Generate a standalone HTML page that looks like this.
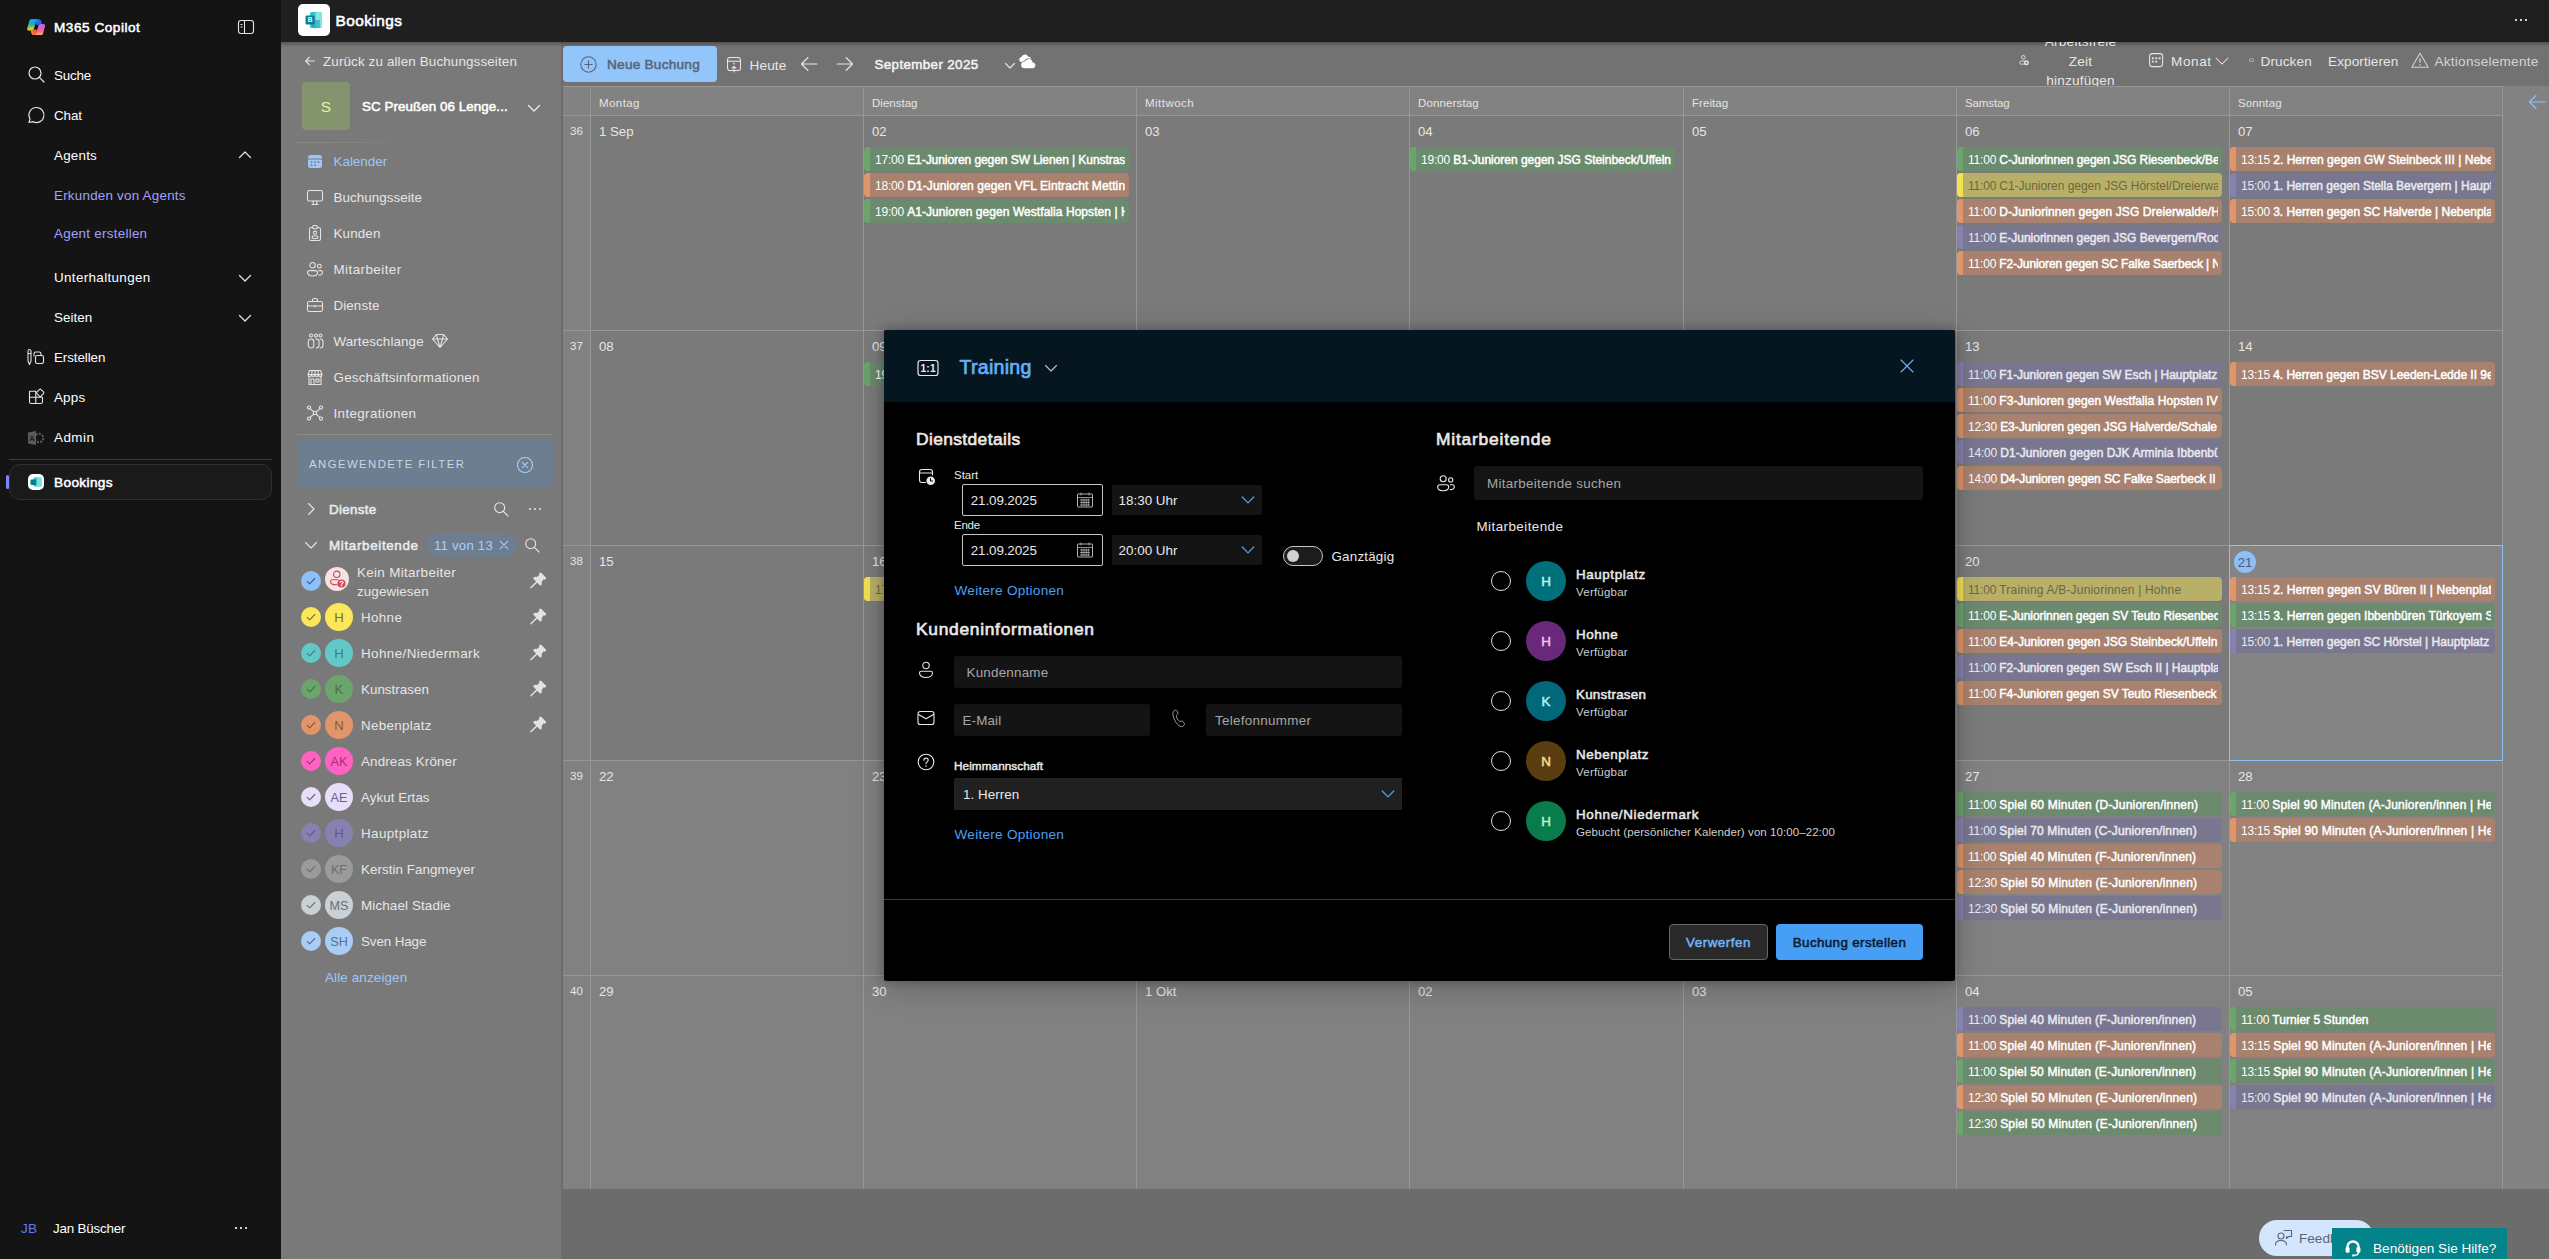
<!DOCTYPE html>
<html lang="de"><head><meta charset="utf-8"><title>Bookings</title><style>
html,body{margin:0;padding:0;background:#141414;}
body{width:2549px;height:1259px;overflow:hidden;position:relative;font-family:"Liberation Sans",sans-serif;}
div,svg{position:absolute;box-sizing:border-box;}
.t{white-space:nowrap;}
.ev{height:24px;border-radius:4px;overflow:hidden;font-size:12px;line-height:24px;color:#fff;white-space:nowrap;letter-spacing:-.2px;}
.ev i{position:absolute;left:0;top:0;width:6px;height:24px;display:block;}
.ev span{position:absolute;left:11px;top:1px;right:4px;height:23px;overflow:hidden;}
.ev b{font-weight:400;-webkit-text-stroke:.48px;}
.ev u{text-decoration:none;}
</style></head><body>
<div style="left:0px;top:0px;width:281px;height:1259px;background:#141414;"></div>
<svg style="left:26.8px;top:18.8px;" width="18.4" height="16.6" viewBox="0 0 18.4 16.6" fill="none"><defs>
<linearGradient id="cg1" x1="0" y1="0" x2="0" y2="1"><stop offset="0" stop-color="#29b4ff"/><stop offset=".22" stop-color="#1a9cf0"/><stop offset=".5" stop-color="#2fb198"/><stop offset=".74" stop-color="#a6cb42"/><stop offset=".93" stop-color="#f3d500"/></linearGradient>
<linearGradient id="cg2" x1="0" y1="0" x2="0" y2="1"><stop offset="0" stop-color="#b267ff"/><stop offset=".4" stop-color="#e660b4"/><stop offset=".66" stop-color="#ff6a84"/><stop offset="1" stop-color="#ffb45e"/></linearGradient>
<linearGradient id="cg3" x1="0" y1="0" x2="1" y2="1"><stop offset="0" stop-color="#1a86f2"/><stop offset="1" stop-color="#1458de"/></linearGradient>
<linearGradient id="cg4" x1="0" y1="0" x2="1" y2="0"><stop offset="0" stop-color="#ff8a48"/><stop offset="1" stop-color="#f2552c"/></linearGradient></defs>
<path d="M8.500 0.200H11.800C13.100 0.200 13.900 0.900 14.300 2.200L15 5H12.700C11.700 5 11 5.600 10.700 6.400L9 5.600z" fill="url(#cg3)"/>
<path d="M9.700 16.300H6.900C5.600 16.300 4.700 15.600 4.400 14.300L3.800 11.400H6.200C7.200 11.400 7.800 10.900 8.100 10L9.800 10.900z" fill="url(#cg4)"/>
<path d="M4.300 0.200H9.600L6.800 10.200C6.500 11.100 5.900 11.500 5 11.500H1.900C0.600 11.500-.1 10.500.3 9.200L2.300 1.800C2.600 .8 3.300 .2 4.300 .2z" fill="url(#cg1)"/>
<path d="M14.100 16.300H8.600L11.500 6.300C11.800 5.400 12.400 4.900 13.300 4.900H16.400C17.700 4.900 18.400 5.900 18 7.200L16 14.700C15.700 15.700 15 16.300 14.100 16.300z" fill="url(#cg2)"/></svg>
<div class="t" style="left:54px;top:18px;font-size:13.6px;line-height:20px;color:#fff;-webkit-text-stroke:0.52px;letter-spacing:0.524px;">M365 Copilot</div>
<svg style="left:236px;top:17px;" width="20" height="20" viewBox="0 0 20 20" fill="none"><rect x="2.500" y="3.500" width="15" height="13" rx="2.500" stroke="#e6e6e6" stroke-width="1.100"/><path d="M8.500 3.500v13M4.500 7.500h2M4.500 10h2" stroke="#e6e6e6" stroke-width="1.100"/></svg>
<svg style="left:25.5px;top:64.3px;" width="20" height="20" viewBox="0 0 20 20" fill="none"><circle cx="9" cy="9" r="6" stroke="#e6e6e6" stroke-width="1.200"/><path d="M13.400 13.400L18 18" stroke="#e6e6e6" stroke-width="1.200" stroke-linecap="round"/></svg>
<div class="t" style="left:54px;top:66px;font-size:13.4px;line-height:20px;color:#fff;letter-spacing:-0.214px;">Suche</div>
<svg style="left:25.7px;top:105px;" width="20" height="20" viewBox="0 0 20 20" fill="none"><path d="M10.500 2.500a7.500 7.500 0 1 1-3.600 14.100L3 17.500l1-3.700A7.500 7.500 0 0 1 10.500 2.500z" stroke="#e6e6e6" stroke-width="1.200" stroke-linejoin="round"/></svg>
<div class="t" style="left:54px;top:106px;font-size:13.4px;line-height:20px;color:#fff;letter-spacing:-0.074px;">Chat</div>
<div class="t" style="left:54px;top:146px;font-size:13.4px;line-height:20px;color:#fff;letter-spacing:0.216px;">Agents</div>
<svg style="left:236px;top:146px;" width="18" height="18" viewBox="0 0 18 18" fill="none"><path d="M3.500 11.500L9 6l5.500 5.500" stroke="#e6e6e6" stroke-width="1.200" stroke-linecap="round" stroke-linejoin="round"/></svg>
<div class="t" style="left:54px;top:186px;font-size:13.4px;line-height:20px;color:#9ea2ff;letter-spacing:0.231px;">Erkunden von Agents</div>
<div class="t" style="left:54px;top:224px;font-size:13.4px;line-height:20px;color:#9ea2ff;letter-spacing:0.265px;">Agent erstellen</div>
<div class="t" style="left:54px;top:268px;font-size:13.4px;line-height:20px;color:#fff;letter-spacing:0.359px;">Unterhaltungen</div>
<svg style="left:236px;top:269px;" width="18" height="18" viewBox="0 0 18 18" fill="none"><path d="M3.500 6.500L9 12l5.500-5.500" stroke="#e6e6e6" stroke-width="1.200" stroke-linecap="round" stroke-linejoin="round"/></svg>
<div class="t" style="left:54px;top:308px;font-size:13.4px;line-height:20px;color:#fff;letter-spacing:0.039px;">Seiten</div>
<svg style="left:236px;top:309px;" width="18" height="18" viewBox="0 0 18 18" fill="none"><path d="M3.500 6.500L9 12l5.500-5.500" stroke="#e6e6e6" stroke-width="1.200" stroke-linecap="round" stroke-linejoin="round"/></svg>
<svg style="left:26px;top:347px;" width="20" height="20" viewBox="0 0 20 20" fill="none"><path d="M3 2.500c1.100 0 2 .9 2 2v9.500L3.500 17.500 2 14V4.500c0-1.100.4-2 1-2zM2 6.500h3" stroke="#e6e6e6" stroke-width="1.100" stroke-linejoin="round"/><path d="M8 9.500V6.700C8 5.800 8.800 5 9.700 5h3.600c.9 0 1.700.8 1.700 1.700V8" stroke="#e6e6e6" stroke-width="1.100"/><rect x="9.500" y="8.500" width="8" height="8" rx="1.700" stroke="#e6e6e6" stroke-width="1.100"/></svg>
<div class="t" style="left:54px;top:348px;font-size:13.4px;line-height:20px;color:#fff;letter-spacing:-0.09px;">Erstellen</div>
<svg style="left:26px;top:386px;" width="20" height="20" viewBox="0 0 20 20" fill="none"><path d="M3.500 5.200h6.300v12.300H5.300c-1 0-1.800-.8-1.800-1.800zM3.500 11.300h13v4.400c0 1-.8 1.800-1.800 1.800H9.800" stroke="#e6e6e6" stroke-width="1.100" stroke-linejoin="round"/><rect x="11.300" y="3.900" width="5.800" height="5.800" rx="1.200" transform="rotate(45 14.200 6.800)" stroke="#e6e6e6" stroke-width="1.100"/></svg>
<div class="t" style="left:54px;top:388px;font-size:13.4px;line-height:20px;color:#fff;letter-spacing:0.192px;">Apps</div>
<svg style="left:26px;top:428px;" width="20" height="20" viewBox="0 0 20 20" fill="none"><path d="M2 4.500L10 3v14l-8-1.500z" fill="#5a5a5a"/><circle cx="13" cy="10" r="4.200" stroke="#5a5a5a" stroke-width="2" stroke-dasharray="2 1.200"/><circle cx="13" cy="10" r="1.600" fill="#141414"/><text x="6" y="13" font-size="7.500" font-weight="700" text-anchor="middle" fill="#1c1c1c" font-family="Liberation Sans,sans-serif">A</text></svg>
<div class="t" style="left:54px;top:428px;font-size:13.4px;line-height:20px;color:#fff;letter-spacing:0.486px;">Admin</div>
<div style="left:9px;top:459px;width:263px;height:1px;background:#3d3d3d;"></div>
<div style="left:9px;top:464px;width:263px;height:36px;background:#1a1a1a;border:1px solid #303030;border-radius:11px;"></div>
<div style="left:6px;top:475px;width:3px;height:14px;background:#7f85f5;border-radius:2px;"></div>
<div style="left:28px;top:474px;width:16px;height:16px;background:#fff;border-radius:5px;"></div>
<svg style="left:30px;top:476px;" width="12" height="12" viewBox="0 0 12 12" fill="none"><rect x="3.500" y="1.500" width="8" height="9" rx="1" fill="#35c5d0"/><rect x="7" y="1.500" width="4.500" height="9" rx="1" fill="#7be3e6"/><rect x="0.500" y="3.500" width="5.500" height="5.500" rx="1" fill="#0b7a8c"/></svg>
<div class="t" style="left:54px;top:473px;font-size:13.6px;line-height:20px;color:#fff;-webkit-text-stroke:0.52px;letter-spacing:0.385px;">Bookings</div>
<div class="t" style="left:21px;top:1219px;font-size:13.6px;line-height:20px;color:#6476f7;letter-spacing:0.312px;">JB</div>
<div class="t" style="left:53px;top:1219px;font-size:13.4px;line-height:20px;color:#fff;letter-spacing:-0.203px;">Jan Büscher</div>
<svg style="left:232px;top:1219px;" width="18" height="18" viewBox="0 0 18 18" fill="none"><circle cx="4" cy="9" r="1.100" fill="#fff"/><circle cx="9" cy="9" r="1.100" fill="#fff"/><circle cx="14" cy="9" r="1.100" fill="#fff"/></svg>
<div style="left:281px;top:0px;width:2268px;height:42px;background:#1f1f1f;"></div>
<div style="left:298px;top:4px;width:32px;height:32px;background:#fff;border-radius:5px;"></div>
<svg style="left:303px;top:9px;" width="22" height="22" viewBox="0 0 22 22" fill="none"><rect x="7" y="3" width="12" height="16" rx="1.500" fill="#2fc3d0"/><rect x="12.500" y="3" width="6.500" height="16" rx="1.500" fill="#7fe5e8"/><rect x="9" y="11" width="8" height="8" fill="#1aa3b5" opacity=".6"/><rect x="2.500" y="6.500" width="9" height="9" rx="1.200" fill="#0b7f93"/><text x="7" y="13.300" font-size="6.500" font-weight="700" text-anchor="middle" fill="#fff" font-family="Liberation Sans,sans-serif">B</text></svg>
<div class="t" style="left:335.5px;top:11px;font-size:15.4px;line-height:20px;color:#fff;-webkit-text-stroke:0.59px;letter-spacing:0.446px;">Bookings</div>
<svg style="left:2512px;top:11px;" width="18" height="18" viewBox="0 0 18 18" fill="none"><circle cx="4" cy="9" r="1.100" fill="#fff"/><circle cx="9" cy="9" r="1.100" fill="#fff"/><circle cx="14" cy="9" r="1.100" fill="#fff"/></svg>
<div style="left:281px;top:42px;width:280px;height:1217px;background:#797979;"></div>
<div style="left:561px;top:42px;width:2px;height:1217px;background:#6c6c6c;"></div>
<svg style="left:304px;top:54px;" width="12" height="14" viewBox="0 0 12 14" fill="none"><path d="M10.500 7H2M5.500 3.200L1.700 7l3.800 3.800" stroke="#e6e6e6" stroke-width="1.100" stroke-linecap="round" stroke-linejoin="round"/></svg>
<div class="t" style="left:323px;top:52px;font-size:13.4px;line-height:20px;color:#e6e6e6;letter-spacing:0.14px;">Zurück zu allen Buchungsseiten</div>
<div style="left:302px;top:82px;width:48px;height:48px;background:#84956d;border-radius:4px;"></div>
<div class="t" style="left:302px;top:97px;font-size:15.4px;line-height:20px;color:#e6efa8;width:48px;text-align:center;">S</div>
<div class="t" style="left:362px;top:97px;font-size:13.4px;line-height:20px;color:#fff;-webkit-text-stroke:0.51px;letter-spacing:0.058px;">SC Preußen 06 Lenge...</div>
<svg style="left:526px;top:100px;" width="16" height="16" viewBox="0 0 16 16" fill="none"><path d="M2.500 5.500L8 11l5.500-5.500" stroke="#f0f0f0" stroke-width="1.200" stroke-linecap="round" stroke-linejoin="round"/></svg>
<div style="left:297px;top:142px;width:98px;height:1px;background:linear-gradient(90deg,#8c8c8c,#7c7c7c);"></div>
<div class="t" style="left:333.5px;top:152px;font-size:13.4px;line-height:20px;color:#9cc7f7;letter-spacing:-0.001px;">Kalender</div>
<div class="t" style="left:333.5px;top:188px;font-size:13.4px;line-height:20px;color:#e6e6e6;letter-spacing:0.05px;">Buchungsseite</div>
<div class="t" style="left:333.5px;top:224px;font-size:13.4px;line-height:20px;color:#e6e6e6;letter-spacing:0.138px;">Kunden</div>
<div class="t" style="left:333.5px;top:260px;font-size:13.4px;line-height:20px;color:#e6e6e6;letter-spacing:0.439px;">Mitarbeiter</div>
<div class="t" style="left:333.5px;top:296px;font-size:13.4px;line-height:20px;color:#e6e6e6;letter-spacing:0.085px;">Dienste</div>
<div class="t" style="left:333.5px;top:332px;font-size:13.4px;line-height:20px;color:#e6e6e6;letter-spacing:0.106px;">Warteschlange</div>
<div class="t" style="left:333.5px;top:368px;font-size:13.4px;line-height:20px;color:#e6e6e6;letter-spacing:0.217px;">Geschäftsinformationen</div>
<div class="t" style="left:333.5px;top:404px;font-size:13.4px;line-height:20px;color:#e6e6e6;letter-spacing:0.363px;">Integrationen</div>
<svg style="left:306px;top:152px;" width="18" height="18" viewBox="0 0 18 18" fill="none"><path d="M2 5.800A2.800 2.800 0 0 1 4.800 3h8.400A2.800 2.800 0 0 1 16 5.800V6.500H2z" fill="#9cc7f7"/><path d="M2 7.500h14v5.700a2.800 2.800 0 0 1-2.800 2.800H4.800A2.800 2.800 0 0 1 2 13.200z" fill="#9cc7f7"/><g fill="#797979"><rect x="4.700" y="9.300" width="1.700" height="1.700" rx=".5"/><rect x="8.150" y="9.300" width="1.700" height="1.700" rx=".5"/><rect x="11.600" y="9.300" width="1.700" height="1.700" rx=".5"/><rect x="4.700" y="12.300" width="1.700" height="1.700" rx=".5"/><rect x="8.150" y="12.300" width="1.700" height="1.700" rx=".5"/></g></svg>
<svg style="left:306px;top:188px;" width="18" height="18" viewBox="0 0 18 18" fill="none"><rect x="1.500" y="2.500" width="15" height="10.500" rx="1.800" stroke="#e6e6e6" stroke-width="1.050" stroke-linecap="round" stroke-linejoin="round"/><path d="M6 16.500h6M7.200 13v3.500M10.800 13v3.500" stroke="#e6e6e6" stroke-width="1.050" stroke-linecap="round" stroke-linejoin="round"/></svg>
<svg style="left:306px;top:224px;" width="18" height="18" viewBox="0 0 18 18" fill="none"><rect x="3.500" y="3.500" width="11" height="13" rx="1.800" stroke="#e6e6e6" stroke-width="1.050" stroke-linecap="round" stroke-linejoin="round"/><rect x="6.800" y="1.500" width="4.400" height="3.200" rx="1" stroke="#e6e6e6" fill="#797979" stroke-width="1.050" stroke-linecap="round" stroke-linejoin="round"/><circle cx="9" cy="8.700" r="1.600" stroke="#e6e6e6" stroke-width="1.050" stroke-linecap="round" stroke-linejoin="round"/><path d="M6 13.300c0-1 .9-1.600 3-1.600s3 .6 3 1.600c0 .8-1.200 1.400-3 1.400s-3-.6-3-1.400z" stroke="#e6e6e6" stroke-width="1.050" stroke-linecap="round" stroke-linejoin="round"/></svg>
<svg style="left:306px;top:260px;" width="18" height="18" viewBox="0 0 18 18" fill="none"><circle cx="6.500" cy="5.200" r="2.700" stroke="#e6e6e6" stroke-width="1.050" stroke-linecap="round" stroke-linejoin="round"/><circle cx="13.300" cy="6.200" r="1.900" stroke="#e6e6e6" stroke-width="1.050" stroke-linecap="round" stroke-linejoin="round"/><path d="M1.500 12.600c0-1.100.9-2 2-2h6c1.100 0 2 .9 2 2 0 2-2 3.400-5 3.400s-5-1.400-5-3.400z" stroke="#e6e6e6" stroke-width="1.050" stroke-linecap="round" stroke-linejoin="round"/><path d="M12.800 15c2.200 0 3.700-1 3.700-2.600 0-1-.7-1.800-1.700-1.800h-2" stroke="#e6e6e6" stroke-width="1.050" stroke-linecap="round" stroke-linejoin="round"/></svg>
<svg style="left:306px;top:296px;" width="18" height="18" viewBox="0 0 18 18" fill="none"><rect x="1.500" y="5.500" width="15" height="10" rx="1.800" stroke="#e6e6e6" stroke-width="1.050" stroke-linecap="round" stroke-linejoin="round"/><path d="M6.500 5.500V4c0-.8.700-1.500 1.500-1.500h2c.8 0 1.500.7 1.500 1.500v1.500M1.500 10h15M9 9.200v1.800" stroke="#e6e6e6" stroke-width="1.050" stroke-linecap="round" stroke-linejoin="round"/></svg>
<svg style="left:306px;top:332px;" width="18" height="18" viewBox="0 0 18 18" fill="none"><circle cx="5" cy="3.500" r="1.500" stroke="#e6e6e6" stroke-width="1.050" stroke-linecap="round" stroke-linejoin="round"/><circle cx="10" cy="3.500" r="1.500" stroke="#e6e6e6" stroke-width="1.050" stroke-linecap="round" stroke-linejoin="round"/><circle cx="14.500" cy="3.500" r="1.500" stroke="#e6e6e6" stroke-width="1.050" stroke-linecap="round" stroke-linejoin="round"/><rect x="2.200" y="7" width="5.600" height="9" rx="2.800" stroke="#e6e6e6" stroke-width="1.050" stroke-linecap="round" stroke-linejoin="round"/><path d="M9.500 7h.7c1.500 0 2.800 1.200 2.800 2.800v3.400c0 1.500-1.200 2.800-2.800 2.800M14 7h.2c1.500 0 2.800 1.200 2.800 2.800v3.400c0 1.500-1.200 2.800-2.800 2.800" stroke="#e6e6e6" stroke-width="1.050" stroke-linecap="round" stroke-linejoin="round"/></svg>
<svg style="left:431px;top:332px;" width="18" height="18" viewBox="0 0 18 18" fill="none"><path d="M5.500 2.500h7L16.500 7 9 15.500 1.500 7zM1.500 7h15M6.500 7L9 15.500 11.500 7M5.500 2.500l1 4.500M12.500 2.500l-1 4.500" stroke="#e6e6e6" stroke-width="1.050" stroke-linecap="round" stroke-linejoin="round"/></svg>
<svg style="left:306px;top:368px;" width="18" height="18" viewBox="0 0 18 18" fill="none"><path d="M2 6.500L3.500 2.500h11L16 6.500M3 8.500v8h12v-8M2 6.500c0 1.100.8 2 1.800 2s1.800-.9 1.800-2c0 1.100.8 2 1.700 2s1.700-.9 1.700-2c0 1.100.8 2 1.700 2s1.700-.9 1.700-2c0 1.100.8 2 1.800 2s1.800-.9 1.800-2zM5.600 6.500l.6-4M9 6.500v-4M12.400 6.500l-.6-4" stroke="#e6e6e6" stroke-width="1.050" stroke-linecap="round" stroke-linejoin="round"/><rect x="5" y="11" width="3" height="5.500" stroke="#e6e6e6" stroke-width="1.050" stroke-linecap="round" stroke-linejoin="round"/><rect x="10" y="11" width="3" height="3" stroke="#e6e6e6" stroke-width="1.050" stroke-linecap="round" stroke-linejoin="round"/></svg>
<svg style="left:306px;top:404px;" width="18" height="18" viewBox="0 0 18 18" fill="none"><circle cx="9" cy="9" r="1.700" stroke="#e6e6e6" stroke-width="1.050" stroke-linecap="round" stroke-linejoin="round"/><circle cx="3" cy="3.500" r="1.600" stroke="#e6e6e6" stroke-width="1.050" stroke-linecap="round" stroke-linejoin="round"/><circle cx="15" cy="3.500" r="1.600" stroke="#e6e6e6" stroke-width="1.050" stroke-linecap="round" stroke-linejoin="round"/><circle cx="3" cy="14.500" r="1.600" stroke="#e6e6e6" stroke-width="1.050" stroke-linecap="round" stroke-linejoin="round"/><circle cx="15" cy="14.500" r="1.600" stroke="#e6e6e6" stroke-width="1.050" stroke-linecap="round" stroke-linejoin="round"/><path d="M4.200 4.600l3.500 3.200M13.800 4.600l-3.500 3.200M4.200 13.400l3.500-3.200M13.800 13.400l-3.500-3.200" stroke="#e6e6e6" stroke-width="1.050" stroke-linecap="round" stroke-linejoin="round"/></svg>
<div style="left:297px;top:434px;width:256px;height:1px;background:#8a8a8a;"></div>
<div style="left:297px;top:439px;width:256px;height:48px;background:#6c7e90;border-radius:4px;"></div>
<div class="t" style="left:309px;top:456px;font-size:11.3px;line-height:16px;color:#c9d6e3;letter-spacing:1.477px;">ANGEWENDETE FILTER</div>
<svg style="left:516px;top:456px;" width="18" height="18" viewBox="0 0 18 18" fill="none"><circle cx="9" cy="9" r="7.500" stroke="#a9cff8" stroke-width="1.100"/><path d="M6.300 6.300l5.400 5.400M11.700 6.300l-5.400 5.400" stroke="#a9cff8" stroke-width="1.100" stroke-linecap="round"/></svg>
<svg style="left:303px;top:501px;" width="16" height="16" viewBox="0 0 16 16" fill="none"><path d="M5.500 2.500L11 8l-5.500 5.500" stroke="#e6e6e6" stroke-width="1.100" stroke-linecap="round" stroke-linejoin="round"/></svg>
<div class="t" style="left:329px;top:500px;font-size:13.4px;line-height:20px;color:#ececec;-webkit-text-stroke:0.51px;letter-spacing:0.299px;">Dienste</div>
<svg style="left:492px;top:500px;" width="18" height="18" viewBox="0 0 18 18" fill="none"><circle cx="7.700" cy="7.700" r="5" stroke="#e6e6e6" stroke-width="1.100"/><path d="M11.400 11.400L16 16" stroke="#e6e6e6" stroke-width="1.100" stroke-linecap="round"/></svg>
<svg style="left:526px;top:500px;" width="18" height="18" viewBox="0 0 18 18" fill="none"><circle cx="4" cy="9" r="1" fill="#e6e6e6"/><circle cx="9" cy="9" r="1" fill="#e6e6e6"/><circle cx="14" cy="9" r="1" fill="#e6e6e6"/></svg>
<svg style="left:303px;top:537px;" width="16" height="16" viewBox="0 0 16 16" fill="none"><path d="M2.500 5.500L8 11l5.500-5.500" stroke="#e6e6e6" stroke-width="1.100" stroke-linecap="round" stroke-linejoin="round"/></svg>
<div class="t" style="left:329px;top:536px;font-size:13.4px;line-height:20px;color:#ececec;-webkit-text-stroke:0.51px;letter-spacing:0.658px;">Mitarbeitende</div>
<div style="left:427px;top:533px;width:89px;height:24px;background:#6c7e90;border-radius:12px;"></div>
<div class="t" style="left:434px;top:536px;font-size:13.2px;line-height:20px;color:#a9cff8;letter-spacing:0.227px;">11 von 13</div>
<svg style="left:496.5px;top:538px;" width="14" height="14" viewBox="0 0 14 14" fill="none"><path d="M3.400 3.400l7.200 7.200M10.600 3.400l-7.200 7.200" stroke="#a9cff8" stroke-width="1.100" stroke-linecap="round"/></svg>
<svg style="left:523px;top:536px;" width="18" height="18" viewBox="0 0 18 18" fill="none"><circle cx="7.700" cy="7.700" r="5" stroke="#e6e6e6" stroke-width="1.100"/><path d="M11.400 11.400L16 16" stroke="#e6e6e6" stroke-width="1.100" stroke-linecap="round"/></svg>
<div style="left:301px;top:571px;width:20px;height:20px;background:#8fbff7;border-radius:50%;"></div>
<svg style="left:305px;top:575px;" width="12" height="12" viewBox="0 0 12 12" fill="none"><path d="M2.200 6.300l2.500 2.500L9.800 3.500" stroke="#3a5d88" stroke-width="1.100" stroke-linecap="round" stroke-linejoin="round"/></svg>
<div style="left:325px;top:567px;width:24px;height:24px;background:#f7e1e2;border-radius:50%;"></div>
<svg style="left:328px;top:570px;" width="18" height="18" viewBox="0 0 18 18" fill="none"><circle cx="8.800" cy="4.300" r="3.200" stroke="#c9444f" stroke-width="1.050"/><path d="M9.300 14.800H7.800c-3.200 0-5.300-1.200-5.300-3 0-1.100.9-2 2-2h5.600" stroke="#c9444f" stroke-width="1.050" stroke-linecap="round"/><circle cx="13.500" cy="13.600" r="4" fill="#cb4a54"/></svg>
<div class="t" style="left:336.5px;top:579px;font-size:7.5px;line-height:10px;color:#fff;-webkit-text-stroke:0.28px;width:10px;text-align:center;">?</div>
<div class="t" style="left:357px;top:563px;font-size:13.4px;line-height:20px;color:#e6e6e6;letter-spacing:0.332px;">Kein Mitarbeiter</div>
<div class="t" style="left:357px;top:582px;font-size:13.4px;line-height:20px;color:#e6e6e6;letter-spacing:0.097px;">zugewiesen</div>
<svg style="left:528px;top:572px;" width="18" height="18" viewBox="0 0 18 18" fill="none"><g transform="translate(9.200 9.500) rotate(45) scale(1.1)" fill="#e2e2e2"><rect x="-3.900" y="-8.200" width="7.800" height="2.600" rx="1.100"/><path d="M-2.700 -6.200h5.400l.5 4.200h-6.400z"/><path d="M-4.900 -.2c0-1.700 1.600-2.700 4.900-2.700s4.900 1 4.900 2.700c0 .5-.4.900-.9.900h-8c-.5 0-.9-.4-.9-.9z"/><rect x="-.650" y=".3" width="1.300" height="8.400" rx=".6"/></g></svg>
<div style="left:301px;top:607px;width:20px;height:20px;background:#fae85a;border-radius:50%;"></div>
<svg style="left:305px;top:611px;" width="12" height="12" viewBox="0 0 12 12" fill="none"><path d="M2.200 6.300l2.500 2.500L9.800 3.500" stroke="#7a7030" stroke-width="1.100" stroke-linecap="round" stroke-linejoin="round"/></svg>
<div style="left:325px;top:603px;width:28px;height:28px;background:#fae85a;border-radius:50%;"></div>
<div class="t" style="left:325px;top:608px;font-size:13.2px;line-height:20px;color:#7a7030;width:28px;text-align:center;">H</div>
<div class="t" style="left:361px;top:608px;font-size:13.4px;line-height:20px;color:#e6e6e6;letter-spacing:0.346px;">Hohne</div>
<svg style="left:528px;top:608px;" width="18" height="18" viewBox="0 0 18 18" fill="none"><g transform="translate(9.200 9.500) rotate(45) scale(1.1)" fill="#e2e2e2"><rect x="-3.900" y="-8.200" width="7.800" height="2.600" rx="1.100"/><path d="M-2.700 -6.200h5.400l.5 4.200h-6.400z"/><path d="M-4.900 -.2c0-1.700 1.600-2.700 4.900-2.700s4.900 1 4.900 2.700c0 .5-.4.900-.9.900h-8c-.5 0-.9-.4-.9-.9z"/><rect x="-.650" y=".3" width="1.300" height="8.400" rx=".6"/></g></svg>
<div style="left:301px;top:643px;width:20px;height:20px;background:#63c8c8;border-radius:50%;"></div>
<svg style="left:305px;top:647px;" width="12" height="12" viewBox="0 0 12 12" fill="none"><path d="M2.200 6.300l2.500 2.500L9.800 3.500" stroke="#3f8080" stroke-width="1.100" stroke-linecap="round" stroke-linejoin="round"/></svg>
<div style="left:325px;top:639px;width:28px;height:28px;background:#63c8c8;border-radius:50%;"></div>
<div class="t" style="left:325px;top:644px;font-size:13.2px;line-height:20px;color:#3f8080;width:28px;text-align:center;">H</div>
<div class="t" style="left:361px;top:644px;font-size:13.4px;line-height:20px;color:#e6e6e6;letter-spacing:0.413px;">Hohne/Niedermark</div>
<svg style="left:528px;top:644px;" width="18" height="18" viewBox="0 0 18 18" fill="none"><g transform="translate(9.200 9.500) rotate(45) scale(1.1)" fill="#e2e2e2"><rect x="-3.900" y="-8.200" width="7.800" height="2.600" rx="1.100"/><path d="M-2.700 -6.200h5.400l.5 4.200h-6.400z"/><path d="M-4.900 -.2c0-1.700 1.600-2.700 4.900-2.700s4.900 1 4.900 2.700c0 .5-.4.900-.9.900h-8c-.5 0-.9-.4-.9-.9z"/><rect x="-.650" y=".3" width="1.300" height="8.400" rx=".6"/></g></svg>
<div style="left:301px;top:679px;width:20px;height:20px;background:#6ba56b;border-radius:50%;"></div>
<svg style="left:305px;top:683px;" width="12" height="12" viewBox="0 0 12 12" fill="none"><path d="M2.200 6.300l2.500 2.500L9.800 3.500" stroke="#447244" stroke-width="1.100" stroke-linecap="round" stroke-linejoin="round"/></svg>
<div style="left:325px;top:675px;width:28px;height:28px;background:#6ba56b;border-radius:50%;"></div>
<div class="t" style="left:325px;top:680px;font-size:13.2px;line-height:20px;color:#447244;width:28px;text-align:center;">K</div>
<div class="t" style="left:361px;top:680px;font-size:13.4px;line-height:20px;color:#e6e6e6;letter-spacing:0.015px;">Kunstrasen</div>
<svg style="left:528px;top:680px;" width="18" height="18" viewBox="0 0 18 18" fill="none"><g transform="translate(9.200 9.500) rotate(45) scale(1.1)" fill="#e2e2e2"><rect x="-3.900" y="-8.200" width="7.800" height="2.600" rx="1.100"/><path d="M-2.700 -6.200h5.400l.5 4.200h-6.400z"/><path d="M-4.900 -.2c0-1.700 1.600-2.700 4.900-2.700s4.900 1 4.900 2.700c0 .5-.4.900-.9.900h-8c-.5 0-.9-.4-.9-.9z"/><rect x="-.650" y=".3" width="1.300" height="8.400" rx=".6"/></g></svg>
<div style="left:301px;top:715px;width:20px;height:20px;background:#e0956b;border-radius:50%;"></div>
<svg style="left:305px;top:719px;" width="12" height="12" viewBox="0 0 12 12" fill="none"><path d="M2.200 6.300l2.500 2.500L9.800 3.500" stroke="#8c5836" stroke-width="1.100" stroke-linecap="round" stroke-linejoin="round"/></svg>
<div style="left:325px;top:711px;width:28px;height:28px;background:#e0956b;border-radius:50%;"></div>
<div class="t" style="left:325px;top:716px;font-size:13.2px;line-height:20px;color:#8c5836;width:28px;text-align:center;">N</div>
<div class="t" style="left:361px;top:716px;font-size:13.4px;line-height:20px;color:#e6e6e6;letter-spacing:0.295px;">Nebenplatz</div>
<svg style="left:528px;top:716px;" width="18" height="18" viewBox="0 0 18 18" fill="none"><g transform="translate(9.200 9.500) rotate(45) scale(1.1)" fill="#e2e2e2"><rect x="-3.900" y="-8.200" width="7.800" height="2.600" rx="1.100"/><path d="M-2.700 -6.200h5.400l.5 4.200h-6.400z"/><path d="M-4.900 -.2c0-1.700 1.600-2.700 4.900-2.700s4.900 1 4.900 2.700c0 .5-.4.900-.9.900h-8c-.5 0-.9-.4-.9-.9z"/><rect x="-.650" y=".3" width="1.300" height="8.400" rx=".6"/></g></svg>
<div style="left:301px;top:751px;width:20px;height:20px;background:#ff62c1;border-radius:50%;"></div>
<svg style="left:305px;top:755px;" width="12" height="12" viewBox="0 0 12 12" fill="none"><path d="M2.200 6.300l2.500 2.500L9.800 3.500" stroke="#a0307a" stroke-width="1.100" stroke-linecap="round" stroke-linejoin="round"/></svg>
<div style="left:325px;top:747px;width:28px;height:28px;background:#ff62c1;border-radius:50%;"></div>
<div class="t" style="left:325px;top:752px;font-size:12.6px;line-height:20px;color:#a0307a;width:28px;text-align:center;">AK</div>
<div class="t" style="left:361px;top:752px;font-size:13.4px;line-height:20px;color:#e6e6e6;letter-spacing:0.143px;">Andreas Kröner</div>
<div style="left:301px;top:787px;width:20px;height:20px;background:#e6defa;border-radius:50%;"></div>
<svg style="left:305px;top:791px;" width="12" height="12" viewBox="0 0 12 12" fill="none"><path d="M2.200 6.300l2.500 2.500L9.800 3.500" stroke="#66607c" stroke-width="1.100" stroke-linecap="round" stroke-linejoin="round"/></svg>
<div style="left:325px;top:783px;width:28px;height:28px;background:#e6defa;border-radius:50%;"></div>
<div class="t" style="left:325px;top:788px;font-size:12.6px;line-height:20px;color:#66607c;width:28px;text-align:center;">AE</div>
<div class="t" style="left:361px;top:788px;font-size:13.4px;line-height:20px;color:#e6e6e6;letter-spacing:0.033px;">Aykut Ertas</div>
<div style="left:301px;top:823px;width:20px;height:20px;background:#8781b1;border-radius:50%;"></div>
<svg style="left:305px;top:827px;" width="12" height="12" viewBox="0 0 12 12" fill="none"><path d="M2.200 6.300l2.500 2.500L9.800 3.500" stroke="#5f5a88" stroke-width="1.100" stroke-linecap="round" stroke-linejoin="round"/></svg>
<div style="left:325px;top:819px;width:28px;height:28px;background:#8781b1;border-radius:50%;"></div>
<div class="t" style="left:325px;top:824px;font-size:13.2px;line-height:20px;color:#5f5a88;width:28px;text-align:center;">H</div>
<div class="t" style="left:361px;top:824px;font-size:13.4px;line-height:20px;color:#e6e6e6;letter-spacing:0.387px;">Hauptplatz</div>
<div style="left:301px;top:859px;width:20px;height:20px;background:#9b9b9b;border-radius:50%;"></div>
<svg style="left:305px;top:863px;" width="12" height="12" viewBox="0 0 12 12" fill="none"><path d="M2.200 6.300l2.500 2.500L9.800 3.500" stroke="#6c6c6c" stroke-width="1.100" stroke-linecap="round" stroke-linejoin="round"/></svg>
<div style="left:325px;top:855px;width:28px;height:28px;background:#9b9b9b;border-radius:50%;"></div>
<div class="t" style="left:325px;top:860px;font-size:12.6px;line-height:20px;color:#6c6c6c;width:28px;text-align:center;">KF</div>
<div class="t" style="left:361px;top:860px;font-size:13.4px;line-height:20px;color:#e6e6e6;letter-spacing:0.046px;">Kerstin Fangmeyer</div>
<div style="left:301px;top:895px;width:20px;height:20px;background:#c9d1d5;border-radius:50%;"></div>
<svg style="left:305px;top:899px;" width="12" height="12" viewBox="0 0 12 12" fill="none"><path d="M2.200 6.300l2.500 2.500L9.800 3.500" stroke="#687074" stroke-width="1.100" stroke-linecap="round" stroke-linejoin="round"/></svg>
<div style="left:325px;top:891px;width:28px;height:28px;background:#c9d1d5;border-radius:50%;"></div>
<div class="t" style="left:325px;top:896px;font-size:12.6px;line-height:20px;color:#687074;width:28px;text-align:center;">MS</div>
<div class="t" style="left:361px;top:896px;font-size:13.4px;line-height:20px;color:#e6e6e6;letter-spacing:0.133px;">Michael Stadie</div>
<div style="left:301px;top:931px;width:20px;height:20px;background:#a9cdf3;border-radius:50%;"></div>
<svg style="left:305px;top:935px;" width="12" height="12" viewBox="0 0 12 12" fill="none"><path d="M2.200 6.300l2.500 2.500L9.800 3.500" stroke="#577192" stroke-width="1.100" stroke-linecap="round" stroke-linejoin="round"/></svg>
<div style="left:325px;top:927px;width:28px;height:28px;background:#a9cdf3;border-radius:50%;"></div>
<div class="t" style="left:325px;top:932px;font-size:12.6px;line-height:20px;color:#577192;width:28px;text-align:center;">SH</div>
<div class="t" style="left:361px;top:932px;font-size:13.4px;line-height:20px;color:#e6e6e6;letter-spacing:-0.107px;">Sven Hage</div>
<div class="t" style="left:325px;top:968px;font-size:13.4px;line-height:20px;color:#9cc7f7;letter-spacing:0.146px;">Alle anzeigen</div>
<div style="left:563px;top:42px;width:1986px;height:45px;background:#727272;"></div>
<div style="left:281px;top:42px;width:2268px;height:5px;background:linear-gradient(180deg,rgba(0,0,0,.28),rgba(0,0,0,0));"></div>
<div style="left:563px;top:1189px;width:1986px;height:70px;background:#6c6c6c;"></div>
<div style="left:563px;top:46px;width:154px;height:36px;background:#92c5f9;border-radius:4px;"></div>
<svg style="left:579px;top:55px;" width="19" height="19" viewBox="0 0 19 19" fill="none"><circle cx="9.500" cy="9.500" r="7.700" stroke="#566579" stroke-width="1.050"/><path d="M9.500 5.800v7.400M5.800 9.500h7.400" stroke="#566579" stroke-width="1.050" stroke-linecap="round"/></svg>
<div class="t" style="left:607px;top:55px;font-size:13.6px;line-height:20px;color:#566579;-webkit-text-stroke:0.52px;letter-spacing:0.254px;">Neue Buchung</div>
<svg style="left:725px;top:55px;" width="18" height="18" viewBox="0 0 18 18" fill="none"><rect x="2.500" y="2.500" width="13" height="13" rx="2.400" stroke="#e6e6e6" stroke-width="1.050"/><path d="M2.500 6.200h13" stroke="#e6e6e6" stroke-width="1.050"/><circle cx="9" cy="8.500" r=".85" fill="#e6e6e6"/><path d="M9 17v-5.300M7.100 13.200L9 11.300l1.900 1.900" stroke="#e6e6e6" stroke-width="1.050" stroke-linecap="round" stroke-linejoin="round"/></svg>
<div class="t" style="left:749.5px;top:56px;font-size:13.6px;line-height:20px;color:#e6e6e6;letter-spacing:0.124px;">Heute</div>
<svg style="left:799px;top:55px;" width="20" height="18" viewBox="0 0 20 18" fill="none"><path d="M18 9H2.500M9 2.500L2.500 9 9 15.500" stroke="#e6e6e6" stroke-width="1.100" stroke-linecap="round" stroke-linejoin="round"/></svg>
<svg style="left:835px;top:55px;" width="20" height="18" viewBox="0 0 20 18" fill="none"><path d="M2 9h15.500M11 2.500L17.500 9 11 15.500" stroke="#e6e6e6" stroke-width="1.100" stroke-linecap="round" stroke-linejoin="round"/></svg>
<div class="t" style="left:874.5px;top:55px;font-size:13.4px;line-height:20px;color:#f2f2f2;-webkit-text-stroke:0.51px;letter-spacing:0.356px;">September 2025</div>
<svg style="left:1003px;top:60px;" width="14" height="12" viewBox="0 0 14 12" fill="none"><path d="M2.500 3.500L7 8l4.500-4.500" stroke="#e6e6e6" stroke-width="1.100" stroke-linecap="round" stroke-linejoin="round"/></svg>
<svg style="left:1018px;top:54px;" width="18" height="16" viewBox="0 0 18 16" fill="none"><path d="M3.200 8.200a2.600 2.600 0 0 1 .3-5.100 3.600 3.600 0 0 1 6.700-.4 2.700 2.700 0 0 1 2.900 1.800L8 6z" fill="#fff"/><path d="M5.800 14.300h8.400a2.900 2.900 0 0 0 .4-5.800 4 4 0 0 0-7.700-.9 3.400 3.400 0 0 0-1.100 6.700z" fill="#fff" stroke="#727272" stroke-width="1.300" paint-order="stroke"/></svg>
<svg style="left:2018px;top:54px;" width="12" height="12" viewBox="0 0 12 12" fill="none"><circle cx="5.300" cy="3.300" r="1.800" stroke="#e6e6e6" stroke-width=".85"/><path d="M5.400 10.200H3.400c-1 0-1.700-.6-1.700-1.500 0-1 .8-1.700 1.800-1.700h2.600" stroke="#e6e6e6" stroke-width=".85" stroke-linecap="round"/><circle cx="8.300" cy="8.700" r="2.500" fill="#e6e6e6"/><path d="M8.300 7.500v2.400M7.100 8.700h2.400" stroke="#727272" stroke-width=".8"/></svg>
<div style="left:2030px;top:42px;width:101px;height:46px;overflow:hidden;"><div class="t" style="left:0;top:-10px;width:101px;text-align:center;font-size:13.6px;line-height:19.5px;letter-spacing:.22px;color:#e6e6e6;white-space:normal;">Arbeitsfreie<br>Zeit<br>hinzufügen</div></div>
<svg style="left:2147px;top:51px;" width="18" height="18" viewBox="0 0 18 18" fill="none"><rect x="2.600" y="2.600" width="13" height="13" rx="2.500" stroke="#e6e6e6" stroke-width="1.050"/><g fill="#e6e6e6"><rect x="4.900" y="6.300" width="1.900" height="1.900" rx=".3"/><rect x="8.300" y="6.300" width="1.900" height="1.900" rx=".3"/><rect x="11.700" y="6.300" width="1.900" height="1.900" rx=".3"/><rect x="4.900" y="9.700" width="1.900" height="1.900" rx=".3"/><rect x="8.300" y="9.700" width="1.900" height="1.900" rx=".3"/></g></svg>
<div class="t" style="left:2171px;top:52px;font-size:13.6px;line-height:20px;color:#e6e6e6;letter-spacing:0.584px;">Monat</div>
<svg style="left:2214px;top:54px;" width="16" height="14" viewBox="0 0 16 14" fill="none"><path d="M2 4l6 6 6-6" stroke="#e6e6e6" stroke-width="1.050" stroke-linecap="round" stroke-linejoin="round"/></svg>
<svg style="left:2249px;top:58px;" width="5" height="5" viewBox="0 0 5 5" fill="none"><rect x=".5" y="1" width="4" height="2.500" rx=".8" stroke="#cfcfcf" stroke-width=".7"/></svg>
<div class="t" style="left:2260.5px;top:52px;font-size:13.6px;line-height:20px;color:#e6e6e6;letter-spacing:0.096px;">Drucken</div>
<div class="t" style="left:2328px;top:52px;font-size:13.6px;line-height:20px;color:#e6e6e6;letter-spacing:0.08px;">Exportieren</div>
<svg style="left:2410px;top:51px;" width="20" height="18" viewBox="0 0 20 18" fill="none"><path d="M10 2.300L18.200 16.300H1.800z" stroke="#d4d4d4" stroke-width="1.050" stroke-linejoin="round"/><path d="M10 7.300v4.500" stroke="#d4d4d4" stroke-width="1.300"/><circle cx="10" cy="13.800" r=".8" fill="#d4d4d4"/></svg>
<div class="t" style="left:2434.5px;top:52px;font-size:13.6px;line-height:20px;color:#d4d4d4;letter-spacing:0.233px;">Aktionselemente</div>
<div style="left:563px;top:86px;width:1940px;height:1103px;background:#7a7a7a;"></div>
<div style="left:563px;top:86px;width:1940px;height:30px;background:#828282;"></div>
<div style="left:563px;top:116px;width:27px;height:1073px;background:#818181;"></div>
<div style="left:591px;top:761px;width:1911px;height:428px;background:#818181;"></div>
<div style="left:2503px;top:86px;width:46px;height:1103px;background:#828282;"></div>
<div style="left:563px;top:86px;width:1940px;height:1px;background:#979797;"></div>
<div style="left:563px;top:115px;width:1940px;height:1px;background:#979797;"></div>
<div style="left:563px;top:330px;width:1940px;height:1px;background:#979797;"></div>
<div style="left:563px;top:545px;width:1940px;height:1px;background:#979797;"></div>
<div style="left:563px;top:760px;width:1940px;height:1px;background:#979797;"></div>
<div style="left:563px;top:975px;width:1940px;height:1px;background:#979797;"></div>
<div style="left:590px;top:86px;width:1px;height:1103px;background:#979797;"></div>
<div style="left:863px;top:86px;width:1px;height:1103px;background:#979797;"></div>
<div style="left:1136px;top:86px;width:1px;height:1103px;background:#979797;"></div>
<div style="left:1409px;top:86px;width:1px;height:1103px;background:#979797;"></div>
<div style="left:1683px;top:86px;width:1px;height:1103px;background:#979797;"></div>
<div style="left:1956px;top:86px;width:1px;height:1103px;background:#979797;"></div>
<div style="left:2229px;top:86px;width:1px;height:1103px;background:#979797;"></div>
<div style="left:2502px;top:86px;width:1px;height:1103px;background:#979797;"></div>
<div style="left:2229px;top:545px;width:274px;height:216px;background:#848484;border:1px solid #8fbff7;"></div>
<div class="t" style="left:599px;top:95px;font-size:11.5px;line-height:16px;color:#e4e4e4;letter-spacing:0.423px;">Montag</div>
<div class="t" style="left:872px;top:95px;font-size:11.5px;line-height:16px;color:#e4e4e4;letter-spacing:0.014px;">Dienstag</div>
<div class="t" style="left:1145px;top:95px;font-size:11.5px;line-height:16px;color:#e4e4e4;letter-spacing:0.478px;">Mittwoch</div>
<div class="t" style="left:1418px;top:95px;font-size:11.5px;line-height:16px;color:#e4e4e4;letter-spacing:0.143px;">Donnerstag</div>
<div class="t" style="left:1692px;top:95px;font-size:11.5px;line-height:16px;color:#e4e4e4;letter-spacing:0.043px;">Freitag</div>
<div class="t" style="left:1965px;top:95px;font-size:11.5px;line-height:16px;color:#e4e4e4;letter-spacing:-0.127px;">Samstag</div>
<div class="t" style="left:2238px;top:95px;font-size:11.5px;line-height:16px;color:#e4e4e4;letter-spacing:0.12px;">Sonntag</div>
<div class="t" style="left:563px;top:123px;font-size:11.5px;line-height:16px;color:#e6e6e6;width:27px;text-align:center;">36</div>
<div class="t" style="left:599px;top:122px;font-size:13.2px;line-height:20px;color:#e6e6e6;">1 Sep</div>
<div class="t" style="left:872px;top:122px;font-size:13.2px;line-height:20px;color:#e6e6e6;">02</div>
<div class="t" style="left:1145px;top:122px;font-size:13.2px;line-height:20px;color:#e6e6e6;">03</div>
<div class="t" style="left:1418px;top:122px;font-size:13.2px;line-height:20px;color:#e6e6e6;">04</div>
<div class="t" style="left:1692px;top:122px;font-size:13.2px;line-height:20px;color:#e6e6e6;">05</div>
<div class="t" style="left:1965px;top:122px;font-size:13.2px;line-height:20px;color:#e6e6e6;">06</div>
<div class="t" style="left:2238px;top:122px;font-size:13.2px;line-height:20px;color:#e6e6e6;">07</div>
<div class="t" style="left:563px;top:338px;font-size:11.5px;line-height:16px;color:#e6e6e6;width:27px;text-align:center;">37</div>
<div class="t" style="left:599px;top:337px;font-size:13.2px;line-height:20px;color:#e6e6e6;">08</div>
<div class="t" style="left:872px;top:337px;font-size:13.2px;line-height:20px;color:#e6e6e6;">09</div>
<div class="t" style="left:1145px;top:337px;font-size:13.2px;line-height:20px;color:#e6e6e6;">10</div>
<div class="t" style="left:1418px;top:337px;font-size:13.2px;line-height:20px;color:#e6e6e6;">11</div>
<div class="t" style="left:1692px;top:337px;font-size:13.2px;line-height:20px;color:#e6e6e6;">12</div>
<div class="t" style="left:1965px;top:337px;font-size:13.2px;line-height:20px;color:#e6e6e6;">13</div>
<div class="t" style="left:2238px;top:337px;font-size:13.2px;line-height:20px;color:#e6e6e6;">14</div>
<div class="t" style="left:563px;top:553px;font-size:11.5px;line-height:16px;color:#e6e6e6;width:27px;text-align:center;">38</div>
<div class="t" style="left:599px;top:552px;font-size:13.2px;line-height:20px;color:#e6e6e6;">15</div>
<div class="t" style="left:872px;top:552px;font-size:13.2px;line-height:20px;color:#e6e6e6;">16</div>
<div class="t" style="left:1145px;top:552px;font-size:13.2px;line-height:20px;color:#e6e6e6;">17</div>
<div class="t" style="left:1418px;top:552px;font-size:13.2px;line-height:20px;color:#e6e6e6;">18</div>
<div class="t" style="left:1692px;top:552px;font-size:13.2px;line-height:20px;color:#e6e6e6;">19</div>
<div class="t" style="left:1965px;top:552px;font-size:13.2px;line-height:20px;color:#e6e6e6;">20</div>
<div style="left:2234px;top:551px;width:22px;height:22px;background:#8fbff7;border-radius:50%;"></div>
<div class="t" style="left:2234px;top:553px;font-size:13.2px;line-height:20px;color:#4a5e78;width:22px;text-align:center;">21</div>
<div class="t" style="left:563px;top:768px;font-size:11.5px;line-height:16px;color:#e6e6e6;width:27px;text-align:center;">39</div>
<div class="t" style="left:599px;top:767px;font-size:13.2px;line-height:20px;color:#e6e6e6;">22</div>
<div class="t" style="left:872px;top:767px;font-size:13.2px;line-height:20px;color:#e6e6e6;">23</div>
<div class="t" style="left:1145px;top:767px;font-size:13.2px;line-height:20px;color:#e6e6e6;">24</div>
<div class="t" style="left:1418px;top:767px;font-size:13.2px;line-height:20px;color:#e6e6e6;">25</div>
<div class="t" style="left:1692px;top:767px;font-size:13.2px;line-height:20px;color:#e6e6e6;">26</div>
<div class="t" style="left:1965px;top:767px;font-size:13.2px;line-height:20px;color:#e6e6e6;">27</div>
<div class="t" style="left:2238px;top:767px;font-size:13.2px;line-height:20px;color:#e6e6e6;">28</div>
<div class="t" style="left:563px;top:983px;font-size:11.5px;line-height:16px;color:#e6e6e6;width:27px;text-align:center;">40</div>
<div class="t" style="left:599px;top:982px;font-size:13.2px;line-height:20px;color:#e6e6e6;">29</div>
<div class="t" style="left:872px;top:982px;font-size:13.2px;line-height:20px;color:#e6e6e6;">30</div>
<div class="t" style="left:1145px;top:982px;font-size:13.2px;line-height:20px;color:#e6e6e6;">1 Okt</div>
<div class="t" style="left:1418px;top:982px;font-size:13.2px;line-height:20px;color:#e6e6e6;">02</div>
<div class="t" style="left:1692px;top:982px;font-size:13.2px;line-height:20px;color:#e6e6e6;">03</div>
<div class="t" style="left:1965px;top:982px;font-size:13.2px;line-height:20px;color:#e6e6e6;">04</div>
<div class="t" style="left:2238px;top:982px;font-size:13.2px;line-height:20px;color:#e6e6e6;">05</div>
<svg style="left:2527px;top:92px;" width="20" height="20" viewBox="0 0 20 20" fill="none"><path d="M18 10H2.500M9 3.500L2.500 10 9 16.500" stroke="#8fbff7" stroke-width="1.100" stroke-linecap="round" stroke-linejoin="round"/></svg>
<div class="ev" style="left:864px;top:147px;width:265px;background:#6b8a6e;color:#fff;"><i style="background:#6ba56b"></i><span>17:00 <b style="letter-spacing:-0.068px">E1-Junioren gegen SW Lienen | Kunstrasen</b></span></div>
<div class="ev" style="left:864px;top:173px;width:265px;background:#a8826e;color:#fff;"><i style="background:#e0956b"></i><span>18:00 <b style="letter-spacing:0.114px">D1-Junioren gegen VFL Eintracht Mettingen</b></span></div>
<div class="ev" style="left:864px;top:199px;width:265px;background:#6b8a6e;color:#fff;"><i style="background:#6ba56b"></i><span>19:00 <b style="letter-spacing:0.055px">A1-Junioren gegen Westfalia Hopsten | Hohne</b></span></div>
<div class="ev" style="left:1410px;top:147px;width:265px;background:#6b8a6e;color:#fff;"><i style="background:#6ba56b"></i><span>19:00 <b style="letter-spacing:-0.02px">B1-Junioren gegen JSG Steinbeck/Uffeln</b></span></div>
<div class="ev" style="left:1957px;top:147px;width:265px;background:#6b8a6e;color:#fff;"><i style="background:#6ba56b"></i><span>11:00 <b style="letter-spacing:-0.047px">C-Juniorinnen gegen JSG Riesenbeck/Bevergern</b></span></div>
<div class="ev" style="left:1957px;top:173px;width:265px;background:#b8b068;color:#6b6840;"><i style="background:#f5e250"></i><span>11:00 <u style="letter-spacing:-0.027px">C1-Junioren gegen JSG Hörstel/Dreierwalde</u></span></div>
<div class="ev" style="left:1957px;top:199px;width:265px;background:#a8826e;color:#fff;"><i style="background:#e0956b"></i><span>11:00 <b style="letter-spacing:0.088px">D-Juniorinnen gegen JSG Dreierwalde/Hörstel</b></span></div>
<div class="ev" style="left:1957px;top:225px;width:265px;background:#79778f;color:#e9e9f1;"><i style="background:#8581b0"></i><span>11:00 <b style="letter-spacing:-0.013px">E-Juniorinnen gegen JSG Bevergern/Rodde</b></span></div>
<div class="ev" style="left:1957px;top:251px;width:265px;background:#a8826e;color:#fff;"><i style="background:#e0956b"></i><span>11:00 <b style="letter-spacing:-0.11px">F2-Junioren gegen SC Falke Saerbeck | Nebenplatz</b></span></div>
<div class="ev" style="left:2230px;top:147px;width:265px;background:#a8826e;color:#fff;"><i style="background:#e0956b"></i><span>13:15 <b style="letter-spacing:0.047px">2. Herren gegen GW Steinbeck III | Nebenplatz</b></span></div>
<div class="ev" style="left:2230px;top:173px;width:265px;background:#79778f;color:#e9e9f1;"><i style="background:#8581b0"></i><span>15:00 <b style="letter-spacing:-0.02px">1. Herren gegen Stella Bevergern | Hauptplatz</b></span></div>
<div class="ev" style="left:2230px;top:199px;width:265px;background:#a8826e;color:#fff;"><i style="background:#e0956b"></i><span>15:00 <b style="letter-spacing:0.014px">3. Herren gegen SC Halverde | Nebenplatz</b></span></div>
<div class="ev" style="left:864px;top:362px;width:265px;background:#6b8a6e;color:#fff;"><i style="background:#6ba56b"></i><span>19:00 <b style="letter-spacing:-0.13px">Training</b></span></div>
<div class="ev" style="left:1957px;top:362px;width:265px;background:#79778f;color:#e9e9f1;"><i style="background:#8581b0"></i><span>11:00 <b style="letter-spacing:-0.068px">F1-Junioren gegen SW Esch | Hauptplatz</b></span></div>
<div class="ev" style="left:1957px;top:388px;width:265px;background:#a8826e;color:#fff;"><i style="background:#e0956b"></i><span>11:00 <b style="letter-spacing:0.068px">F3-Junioren gegen Westfalia Hopsten IV</b></span></div>
<div class="ev" style="left:1957px;top:414px;width:265px;background:#a8826e;color:#fff;"><i style="background:#e0956b"></i><span>12:30 <b style="letter-spacing:-0.072px">E3-Junioren gegen JSG Halverde/Schale</b></span></div>
<div class="ev" style="left:1957px;top:440px;width:265px;background:#79778f;color:#e9e9f1;"><i style="background:#8581b0"></i><span>14:00 <b style="letter-spacing:0.069px">D1-Junioren gegen DJK Arminia Ibbenbüren</b></span></div>
<div class="ev" style="left:1957px;top:466px;width:265px;background:#a8826e;color:#fff;"><i style="background:#e0956b"></i><span>14:00 <b style="letter-spacing:-0.092px">D4-Junioren gegen SC Falke Saerbeck II</b></span></div>
<div class="ev" style="left:2230px;top:362px;width:265px;background:#a8826e;color:#fff;"><i style="background:#e0956b"></i><span>13:15 <b style="letter-spacing:-0.029px">4. Herren gegen BSV Leeden-Ledde II 9er</b></span></div>
<div class="ev" style="left:864px;top:577px;width:265px;background:#b8b068;color:#6b6840;"><i style="background:#f5e250"></i><span>17:00 <u style="letter-spacing:0.36px">Training</u></span></div>
<div class="ev" style="left:1957px;top:577px;width:265px;background:#b8b068;color:#6b6840;"><i style="background:#f5e250"></i><span>11:00 <u style="letter-spacing:0.184px">Training A/B-Juniorinnen | Hohne</u></span></div>
<div class="ev" style="left:1957px;top:603px;width:265px;background:#6b8a6e;color:#fff;"><i style="background:#6ba56b"></i><span>11:00 <b style="letter-spacing:-0.058px">E-Juniorinnen gegen SV Teuto Riesenbeck</b></span></div>
<div class="ev" style="left:1957px;top:629px;width:265px;background:#a8826e;color:#fff;"><i style="background:#e0956b"></i><span>11:00 <b style="letter-spacing:-0.015px">E4-Junioren gegen JSG Steinbeck/Uffeln</b></span></div>
<div class="ev" style="left:1957px;top:655px;width:265px;background:#79778f;color:#e9e9f1;"><i style="background:#8581b0"></i><span>11:00 <b style="letter-spacing:-0.021px">F2-Junioren gegen SW Esch II | Hauptplatz</b></span></div>
<div class="ev" style="left:1957px;top:681px;width:265px;background:#a8826e;color:#fff;"><i style="background:#e0956b"></i><span>11:00 <b style="letter-spacing:-0.035px">F4-Junioren gegen SV Teuto Riesenbeck</b></span></div>
<div class="ev" style="left:2230px;top:577px;width:265px;background:#a8826e;color:#fff;"><i style="background:#e0956b"></i><span>13:15 <b style="letter-spacing:0.069px">2. Herren gegen SV Büren II | Nebenplatz</b></span></div>
<div class="ev" style="left:2230px;top:603px;width:265px;background:#6b8a6e;color:#fff;"><i style="background:#6ba56b"></i><span>13:15 <b style="letter-spacing:0.049px">3. Herren gegen Ibbenbüren Türkoyem Spor</b></span></div>
<div class="ev" style="left:2230px;top:629px;width:265px;background:#79778f;color:#e9e9f1;"><i style="background:#8581b0"></i><span>15:00 <b style="letter-spacing:0.02px">1. Herren gegen SC Hörstel | Hauptplatz</b></span></div>
<div class="ev" style="left:1957px;top:792px;width:265px;background:#6b8a6e;color:#fff;"><i style="background:#6ba56b"></i><span>11:00 <b style="letter-spacing:0.197px">Spiel 60 Minuten (D-Junioren/innen)</b></span></div>
<div class="ev" style="left:1957px;top:818px;width:265px;background:#79778f;color:#e9e9f1;"><i style="background:#8581b0"></i><span>11:00 <b style="letter-spacing:0.154px">Spiel 70 Minuten (C-Junioren/innen)</b></span></div>
<div class="ev" style="left:1957px;top:844px;width:265px;background:#a8826e;color:#fff;"><i style="background:#e0956b"></i><span>11:00 <b style="letter-spacing:0.178px">Spiel 40 Minuten (F-Junioren/innen)</b></span></div>
<div class="ev" style="left:1957px;top:870px;width:265px;background:#a8826e;color:#fff;"><i style="background:#e0956b"></i><span>12:30 <b style="letter-spacing:0.158px">Spiel 50 Minuten (E-Junioren/innen)</b></span></div>
<div class="ev" style="left:1957px;top:896px;width:265px;background:#79778f;color:#e9e9f1;"><i style="background:#8581b0"></i><span>12:30 <b style="letter-spacing:0.158px">Spiel 50 Minuten (E-Junioren/innen)</b></span></div>
<div class="ev" style="left:2230px;top:792px;width:265px;background:#6b8a6e;color:#fff;"><i style="background:#6ba56b"></i><span>11:00 <b style="letter-spacing:0.201px">Spiel 90 Minuten (A-Junioren/innen | Herren)</b></span></div>
<div class="ev" style="left:2230px;top:818px;width:265px;background:#a8826e;color:#fff;"><i style="background:#e0956b"></i><span>13:15 <b style="letter-spacing:0.201px">Spiel 90 Minuten (A-Junioren/innen | Herren)</b></span></div>
<div class="ev" style="left:1957px;top:1007px;width:265px;background:#79778f;color:#e9e9f1;"><i style="background:#8581b0"></i><span>11:00 <b style="letter-spacing:0.178px">Spiel 40 Minuten (F-Junioren/innen)</b></span></div>
<div class="ev" style="left:1957px;top:1033px;width:265px;background:#a8826e;color:#fff;"><i style="background:#e0956b"></i><span>11:00 <b style="letter-spacing:0.178px">Spiel 40 Minuten (F-Junioren/innen)</b></span></div>
<div class="ev" style="left:1957px;top:1059px;width:265px;background:#6b8a6e;color:#fff;"><i style="background:#6ba56b"></i><span>11:00 <b style="letter-spacing:0.158px">Spiel 50 Minuten (E-Junioren/innen)</b></span></div>
<div class="ev" style="left:1957px;top:1085px;width:265px;background:#a8826e;color:#fff;"><i style="background:#e0956b"></i><span>12:30 <b style="letter-spacing:0.158px">Spiel 50 Minuten (E-Junioren/innen)</b></span></div>
<div class="ev" style="left:1957px;top:1111px;width:265px;background:#6b8a6e;color:#fff;"><i style="background:#6ba56b"></i><span>12:30 <b style="letter-spacing:0.158px">Spiel 50 Minuten (E-Junioren/innen)</b></span></div>
<div class="ev" style="left:2230px;top:1007px;width:265px;background:#6b8a6e;color:#fff;"><i style="background:#6ba56b"></i><span>11:00 <b style="letter-spacing:0.04px">Turnier 5 Stunden</b></span></div>
<div class="ev" style="left:2230px;top:1033px;width:265px;background:#a8826e;color:#fff;"><i style="background:#e0956b"></i><span>13:15 <b style="letter-spacing:0.201px">Spiel 90 Minuten (A-Junioren/innen | Herren)</b></span></div>
<div class="ev" style="left:2230px;top:1059px;width:265px;background:#6b8a6e;color:#fff;"><i style="background:#6ba56b"></i><span>13:15 <b style="letter-spacing:0.201px">Spiel 90 Minuten (A-Junioren/innen | Herren)</b></span></div>
<div class="ev" style="left:2230px;top:1085px;width:265px;background:#79778f;color:#e9e9f1;"><i style="background:#8581b0"></i><span>15:00 <b style="letter-spacing:0.201px">Spiel 90 Minuten (A-Junioren/innen | Herren)</b></span></div>
<div style="left:2259px;top:1220px;width:115px;height:36px;background:#d3e6fd;border-radius:18px;"></div>
<svg style="left:2274px;top:1228px;" width="20" height="20" viewBox="0 0 20 20" fill="none"><circle cx="7" cy="8" r="3" stroke="#5d6573" stroke-width="1.100"/><path d="M1.500 17c0-2.800 2.300-4.500 5.500-4.500s5.500 1.700 5.500 4.500" stroke="#5d6573" stroke-width="1.100" stroke-linecap="round"/><path d="M10 2.500h7.500v6h-3l-2 2v-2" stroke="#5d6573" stroke-width="1.100" stroke-linejoin="round" stroke-linecap="round"/></svg>
<div class="t" style="left:2299px;top:1229px;font-size:13.6px;line-height:20px;color:#5d6573;">Feedback</div>
<div style="left:2332px;top:1228px;width:175px;height:31px;background:#03838a;"></div>
<svg style="left:2344px;top:1239px;" width="18" height="18" viewBox="0 0 18 18" fill="none"><path d="M3.300 10V8.200a5.700 5.700 0 0 1 11.400 0V10" stroke="#fff" stroke-width="2.300"/><rect x="1.600" y="7.800" width="4" height="6" rx="1.600" fill="#fff"/><rect x="12.400" y="7.800" width="4" height="6" rx="1.600" fill="#fff"/><path d="M14.400 13.500c0 1.800-1.700 2.900-4.600 2.900" stroke="#fff" stroke-width="1.400" stroke-linecap="round"/><circle cx="9.300" cy="16.400" r="1.200" fill="#fff"/></svg>
<div class="t" style="left:2373px;top:1239px;font-size:13.6px;line-height:20px;color:#fff;letter-spacing:0.006px;">Benötigen Sie Hilfe?</div>
<div style="left:884px;top:330px;width:1071px;height:651px;background:#000;box-shadow:0 0 10px 1px rgba(0,0,0,.22),0 6px 30px rgba(0,0,0,.22);border-radius:2px;"></div>
<div style="left:884px;top:330px;width:1071px;height:72px;background:#051621;border-radius:2px 2px 0 0;"></div>
<svg style="left:916px;top:357px;" width="24" height="22" viewBox="0 0 24 22" fill="none"><rect x="2" y="3.500" width="20" height="15" rx="2.500" stroke="#e8e8e8" stroke-width="1.200"/><text x="12.100" y="14.700" font-size="10.200" font-weight="700" text-anchor="middle" fill="#e8e8e8" font-family="Liberation Sans,sans-serif" letter-spacing=".2">1:1</text></svg>
<div class="t" style="left:959.5px;top:353px;font-size:19.6px;line-height:28px;color:#63aef7;-webkit-text-stroke:0.74px;letter-spacing:0.267px;">Training</div>
<svg style="left:1043px;top:361px;" width="16" height="14" viewBox="0 0 16 14" fill="none"><path d="M2.500 4.500L8 10l5.500-5.500" stroke="#c4c4c4" stroke-width="1.100" stroke-linecap="round" stroke-linejoin="round"/></svg>
<svg style="left:1899px;top:358px;" width="16" height="16" viewBox="0 0 16 16" fill="none"><path d="M2 2l12 12M14 2L2 14" stroke="#6fb4f7" stroke-width="1.100" stroke-linecap="round"/></svg>
<div class="t" style="left:916px;top:427px;font-size:17.4px;line-height:24px;color:#e8e8e8;-webkit-text-stroke:0.66px;letter-spacing:0.379px;">Dienstdetails</div>
<div class="t" style="left:1436px;top:427px;font-size:17.4px;line-height:24px;color:#e8e8e8;-webkit-text-stroke:0.66px;letter-spacing:0.794px;">Mitarbeitende</div>
<svg style="left:917px;top:467px;" width="20" height="20" viewBox="0 0 20 20" fill="none"><path d="M15.500 8V5c0-1.400-1.100-2.500-2.500-2.500H5C3.600 2.500 2.500 3.600 2.500 5v8c0 1.400 1.100 2.500 2.500 2.500h3.500M2.500 6h13" stroke="#e8e8e8" stroke-width="1.100" stroke-linecap="round"/><circle cx="13.700" cy="13.700" r="4.300" fill="#e8e8e8"/><path d="M13.500 11.500v2.500h2" stroke="#000" stroke-width="1" stroke-linecap="round" stroke-linejoin="round"/></svg>
<div class="t" style="left:954px;top:467px;font-size:11.5px;line-height:16px;color:#e8e8e8;letter-spacing:-0.039px;">Start</div>
<div class="t" style="left:954px;top:517px;font-size:11.5px;line-height:16px;color:#e8e8e8;letter-spacing:-0.24px;">Ende</div>
<div style="left:962px;top:484px;width:141px;height:32px;background:#000;border:1px solid #c6c6c6;border-radius:2px;"></div>
<div class="t" style="left:970.7px;top:491px;font-size:13.4px;line-height:20px;color:#e8e8e8;letter-spacing:-0.093px;">21.09.2025</div>
<svg style="left:1076px;top:491px;" width="18" height="18" viewBox="0 0 18 18" fill="none"><rect x="1.500" y="3" width="15" height="13" rx=".5" stroke="#b4b4b4" stroke-width="1"/><path d="M1.500 6.500h15M5 1.500v3M13 1.500v3M4 9h10M4 11.500h10M4 14h10M5.800 7.500v7.500M8 7.500v7.500M10.200 7.500v7.500M12.300 7.500v7.500" stroke="#b4b4b4" stroke-width=".8"/></svg>
<div style="left:962px;top:534px;width:141px;height:32px;background:#000;border:1px solid #c6c6c6;border-radius:2px;"></div>
<div class="t" style="left:970.7px;top:541px;font-size:13.4px;line-height:20px;color:#e8e8e8;letter-spacing:-0.093px;">21.09.2025</div>
<svg style="left:1076px;top:541px;" width="18" height="18" viewBox="0 0 18 18" fill="none"><rect x="1.500" y="3" width="15" height="13" rx=".5" stroke="#b4b4b4" stroke-width="1"/><path d="M1.500 6.500h15M5 1.500v3M13 1.500v3M4 9h10M4 11.500h10M4 14h10M5.800 7.500v7.500M8 7.500v7.500M10.200 7.500v7.500M12.300 7.500v7.500" stroke="#b4b4b4" stroke-width=".8"/></svg>
<div style="left:1112px;top:485px;width:150px;height:30px;background:#141414;border-radius:2px;"></div>
<div class="t" style="left:1118.5px;top:491px;font-size:13.4px;line-height:20px;color:#e8e8e8;letter-spacing:0.021px;">18:30 Uhr</div>
<svg style="left:1240px;top:493px;" width="16" height="14" viewBox="0 0 16 14" fill="none"><path d="M2.200 4l5.800 5.800L13.800 4" stroke="#4fa3f5" stroke-width="1.200" stroke-linecap="round" stroke-linejoin="round"/></svg>
<div style="left:1112px;top:535px;width:150px;height:30px;background:#141414;border-radius:2px;"></div>
<div class="t" style="left:1118.5px;top:541px;font-size:13.4px;line-height:20px;color:#e8e8e8;letter-spacing:0.021px;">20:00 Uhr</div>
<svg style="left:1240px;top:543px;" width="16" height="14" viewBox="0 0 16 14" fill="none"><path d="M2.200 4l5.800 5.800L13.800 4" stroke="#4fa3f5" stroke-width="1.200" stroke-linecap="round" stroke-linejoin="round"/></svg>
<div style="left:1283px;top:546px;width:40px;height:20px;background:#1c1c1c;border:1px solid #c6c6c6;border-radius:10px;"></div>
<div style="left:1287px;top:550px;width:12px;height:12px;background:#d0d0d0;border-radius:50%;"></div>
<div class="t" style="left:1331.5px;top:547px;font-size:13.4px;line-height:20px;color:#e8e8e8;letter-spacing:0.195px;">Ganztägig</div>
<div class="t" style="left:954.5px;top:581px;font-size:13.6px;line-height:20px;color:#4b9ff5;letter-spacing:0.253px;">Weitere Optionen</div>
<div class="t" style="left:916px;top:617px;font-size:17.4px;line-height:24px;color:#e8e8e8;-webkit-text-stroke:0.66px;letter-spacing:0.703px;">Kundeninformationen</div>
<svg style="left:917px;top:660px;" width="18" height="20" viewBox="0 0 18 20" fill="none"><circle cx="9" cy="5.500" r="3.200" stroke="#e8e8e8" stroke-width="1.100"/><path d="M2.500 13c0-1 .8-1.800 1.800-1.800h9.400c1 0 1.800.8 1.800 1.800 0 2.500-2.700 4.500-6.500 4.500S2.500 15.500 2.500 13z" stroke="#e8e8e8" stroke-width="1.100"/></svg>
<div style="left:954px;top:656px;width:448px;height:32px;background:#141414;border-radius:3px;"></div>
<div class="t" style="left:966.5px;top:663px;font-size:13.4px;line-height:20px;color:#a6a6a6;letter-spacing:0.223px;">Kundenname</div>
<svg style="left:917px;top:710px;" width="18" height="16" viewBox="0 0 18 16" fill="none"><rect x="1" y="1.500" width="16" height="13" rx="2.300" stroke="#e8e8e8" stroke-width="1.100"/><path d="M1.500 4.500L9 8.800l7.500-4.300" stroke="#e8e8e8" stroke-width="1.100" stroke-linecap="round" stroke-linejoin="round"/></svg>
<div style="left:954px;top:704px;width:196px;height:32px;background:#141414;border-radius:3px;"></div>
<div class="t" style="left:962.5px;top:711px;font-size:13.4px;line-height:20px;color:#a6a6a6;letter-spacing:0.158px;">E-Mail</div>
<svg style="left:1169px;top:708px;" width="18" height="20" viewBox="0 0 18 20" fill="none"><path d="M5.200 2.300l1.300-.4c.8-.2 1.500.2 1.800.9l.8 2c.3.600.1 1.300-.4 1.800L7.400 7.800c-.1.900.4 2.300 1.300 3.700.9 1.500 1.900 2.500 2.700 2.800l1.700-.5c.7-.2 1.400.1 1.800.6l1.200 1.800c.4.600.300 1.400-.2 1.900l-1 .9c-.9.800-2.200 1-3.300.4-2.100-1.100-3.900-3.100-5.500-5.900C4.500 10.700 3.700 8.100 3.800 5.700c.1-1.700.4-2.900 1.400-3.400z" stroke="#a8a8a8" stroke-width="1" transform="scale(.92) translate(.5,.5)"/></svg>
<div style="left:1206px;top:704px;width:196px;height:32px;background:#141414;border-radius:3px;"></div>
<div class="t" style="left:1215px;top:711px;font-size:13.4px;line-height:20px;color:#a6a6a6;letter-spacing:0.308px;">Telefonnummer</div>
<svg style="left:916px;top:752px;" width="20" height="20" viewBox="0 0 20 20" fill="none"><circle cx="10" cy="10" r="7.800" stroke="#e8e8e8" stroke-width="1.100"/><path d="M7.800 8.200c0-1.200 1-2.100 2.200-2.100s2.200.9 2.200 2c0 1.800-2.200 1.800-2.200 3.600" stroke="#e8e8e8" stroke-width="1.100" stroke-linecap="round"/><circle cx="10" cy="14" r=".8" fill="#e8e8e8"/></svg>
<div class="t" style="left:954px;top:758px;font-size:11.7px;line-height:16px;color:#e8e8e8;-webkit-text-stroke:0.44px;letter-spacing:0.107px;">Heimmannschaft</div>
<div style="left:954px;top:778px;width:448px;height:32px;background:#202020;"></div>
<div class="t" style="left:963px;top:785px;font-size:13.4px;line-height:20px;color:#e8e8e8;letter-spacing:0.041px;">1. Herren</div>
<svg style="left:1380px;top:787px;" width="16" height="14" viewBox="0 0 16 14" fill="none"><path d="M2.200 4l5.800 5.800L13.800 4" stroke="#4fa3f5" stroke-width="1.200" stroke-linecap="round" stroke-linejoin="round"/></svg>
<div class="t" style="left:954.5px;top:825px;font-size:13.6px;line-height:20px;color:#4b9ff5;letter-spacing:0.253px;">Weitere Optionen</div>
<svg style="left:1436px;top:473px;" width="20" height="20" viewBox="0 0 20 20" fill="none"><circle cx="7.200" cy="5.800" r="3" stroke="#e8e8e8" stroke-width="1.100"/><circle cx="14.700" cy="6.900" r="2.100" stroke="#e8e8e8" stroke-width="1.100"/><path d="M1.700 14c0-1.200 1-2.200 2.200-2.200h6.600c1.200 0 2.200 1 2.200 2.200 0 2.200-2.200 3.700-5.500 3.700S1.700 16.200 1.700 14z" stroke="#e8e8e8" stroke-width="1.100"/><path d="M14.200 16.600c2.400 0 4.100-1.100 4.100-2.900 0-1.100-.8-2-1.900-2h-2.200" stroke="#e8e8e8" stroke-width="1.100" stroke-linecap="round"/></svg>
<div style="left:1474px;top:466px;width:449px;height:34px;background:#141414;border-radius:3px;"></div>
<div class="t" style="left:1487px;top:474px;font-size:13.4px;line-height:20px;color:#a6a6a6;letter-spacing:0.308px;">Mitarbeitende suchen</div>
<div class="t" style="left:1476.5px;top:517px;font-size:13.4px;line-height:20px;color:#e8e8e8;letter-spacing:0.443px;">Mitarbeitende</div>
<div style="left:1491px;top:571px;width:20px;height:20px;background:#000;border:1px solid #e0e0e0;border-radius:50%;"></div>
<div style="left:1526px;top:561px;width:40px;height:40px;background:#00707b;border-radius:50%;"></div>
<div class="t" style="left:1526px;top:572px;font-size:13.4px;line-height:20px;color:#b7f3f3;-webkit-text-stroke:0.51px;width:40px;text-align:center;">H</div>
<div class="t" style="left:1576px;top:565px;font-size:13.4px;line-height:20px;color:#e8e8e8;-webkit-text-stroke:0.51px;letter-spacing:0.587px;">Hauptplatz</div>
<div class="t" style="left:1576px;top:584px;font-size:11.5px;line-height:16px;color:#cfcfcf;letter-spacing:0.225px;">Verfügbar</div>
<div style="left:1491px;top:631px;width:20px;height:20px;background:#000;border:1px solid #e0e0e0;border-radius:50%;"></div>
<div style="left:1526px;top:621px;width:40px;height:40px;background:#69287a;border-radius:50%;"></div>
<div class="t" style="left:1526px;top:632px;font-size:13.4px;line-height:20px;color:#ecc0f7;-webkit-text-stroke:0.51px;width:40px;text-align:center;">H</div>
<div class="t" style="left:1576px;top:625px;font-size:13.4px;line-height:20px;color:#e8e8e8;-webkit-text-stroke:0.51px;letter-spacing:0.566px;">Hohne</div>
<div class="t" style="left:1576px;top:644px;font-size:11.5px;line-height:16px;color:#cfcfcf;letter-spacing:0.225px;">Verfügbar</div>
<div style="left:1491px;top:691px;width:20px;height:20px;background:#000;border:1px solid #e0e0e0;border-radius:50%;"></div>
<div style="left:1526px;top:681px;width:40px;height:40px;background:#006879;border-radius:50%;"></div>
<div class="t" style="left:1526px;top:692px;font-size:13.4px;line-height:20px;color:#b7ecf3;-webkit-text-stroke:0.51px;width:40px;text-align:center;">K</div>
<div class="t" style="left:1576px;top:685px;font-size:13.4px;line-height:20px;color:#e8e8e8;-webkit-text-stroke:0.51px;letter-spacing:0.245px;">Kunstrasen</div>
<div class="t" style="left:1576px;top:704px;font-size:11.5px;line-height:16px;color:#cfcfcf;letter-spacing:0.225px;">Verfügbar</div>
<div style="left:1491px;top:751px;width:20px;height:20px;background:#000;border:1px solid #e0e0e0;border-radius:50%;"></div>
<div style="left:1526px;top:741px;width:40px;height:40px;background:#5b3d12;border-radius:50%;"></div>
<div class="t" style="left:1526px;top:752px;font-size:13.4px;line-height:20px;color:#f3dc94;-webkit-text-stroke:0.51px;width:40px;text-align:center;">N</div>
<div class="t" style="left:1576px;top:745px;font-size:13.4px;line-height:20px;color:#e8e8e8;-webkit-text-stroke:0.51px;letter-spacing:0.535px;">Nebenplatz</div>
<div class="t" style="left:1576px;top:764px;font-size:11.5px;line-height:16px;color:#cfcfcf;letter-spacing:0.225px;">Verfügbar</div>
<div style="left:1491px;top:811px;width:20px;height:20px;background:#000;border:1px solid #e0e0e0;border-radius:50%;"></div>
<div style="left:1526px;top:801px;width:40px;height:40px;background:#0a7b4c;border-radius:50%;"></div>
<div class="t" style="left:1526px;top:812px;font-size:13.4px;line-height:20px;color:#b0f3cf;-webkit-text-stroke:0.51px;width:40px;text-align:center;">H</div>
<div class="t" style="left:1576px;top:805px;font-size:13.4px;line-height:20px;color:#e8e8e8;-webkit-text-stroke:0.51px;letter-spacing:0.663px;">Hohne/Niedermark</div>
<div class="t" style="left:1576px;top:824px;font-size:11.5px;line-height:16px;color:#cfcfcf;letter-spacing:0.083px;">Gebucht (persönlicher Kalender) von 10:00–22:00</div>
<div style="left:884px;top:899px;width:1071px;height:1px;background:#3b3b3b;"></div>
<div style="left:1669px;top:924px;width:99px;height:36px;background:#292929;border:1px solid #666;border-radius:4px;"></div>
<div class="t" style="left:1669px;top:933px;font-size:13.4px;line-height:20px;color:#6fb4f7;-webkit-text-stroke:0.51px;width:99px;text-align:center;letter-spacing:0.5px;">Verwerfen</div>
<div style="left:1776px;top:924px;width:147px;height:36px;background:#479ef5;border-radius:4px;"></div>
<div class="t" style="left:1776px;top:933px;font-size:13.4px;line-height:20px;color:#0b1a2b;-webkit-text-stroke:0.51px;width:147px;text-align:center;letter-spacing:0.365px;">Buchung erstellen</div>
</body></html>
